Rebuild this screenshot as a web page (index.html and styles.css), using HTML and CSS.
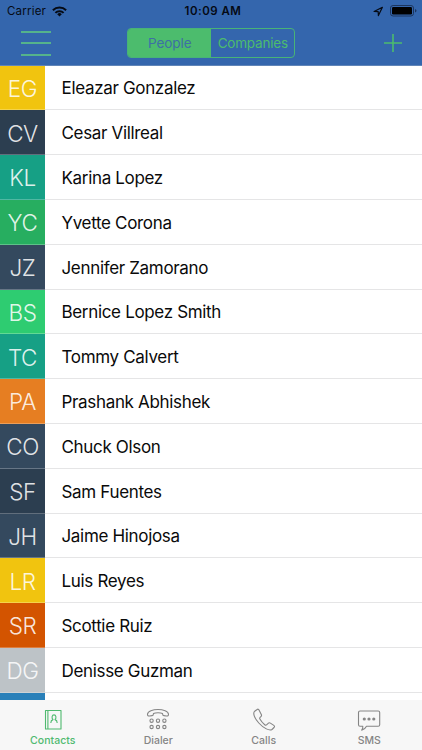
FILE: index.html
```html
<!DOCTYPE html>
<html lang="en">
<head>
<meta charset="utf-8">
<title>Contacts</title>
<link rel="stylesheet" href="styles.css">
</head>
<body>
<div class="app">
  <header class="header">
    <div class="status">
      <div class="carrier"><span>Carrier</span>
        <svg width="15" height="11" viewBox="0 0 15 11"><g fill="none" stroke="#050a14" stroke-width="2"><path d="M.9 4.2a9.4 9.4 0 0 1 13.2 0"/><path d="M3.4 6.9a5.8 5.8 0 0 1 8.2 0"/></g><path d="M5.2 8.2a3.3 3.3 0 0 1 4.6 0L7.5 10.6z" fill="#050a14"/></svg>
      </div>
      <div class="time">10:09 AM</div>
      <div class="indicators">
        <svg width="11" height="11" viewBox="0 0 11 11"><path d="M1.1 5.5 9.4 1.3 5.4 9.6 5.2 5.7z" fill="none" stroke="#050a14" stroke-width="1.2" stroke-linejoin="round"/></svg>
        <svg width="27" height="12" viewBox="0 0 27 12"><rect x=".5" y=".5" width="23" height="10.5" rx="2.6" fill="none" stroke="#1c355d"/><rect x="2" y="2" width="20" height="7.5" rx="1.2" fill="#000"/><path d="M25 4v3.5q1.5-.5 1.5-1.75T25 4" fill="#1c355d"/></svg>
      </div>
    </div>
    <nav class="toolbar">
      <div class="menu"><i></i><i></i><i></i></div>
      <div class="segments"><div class="segment selected">People</div><div class="segment">Companies</div></div>
      <svg class="add" width="18" height="18" viewBox="0 0 18 18"><path d="M9 0v18M0 9h18" stroke="#4cbc6d" stroke-width="1.6"/></svg>
    </nav>
  </header>
  <main class="list">
    <div class="row"><div class="avatar yellow">EG</div><div class="name">Eleazar Gonzalez</div></div>
    <div class="row"><div class="avatar midnight">CV</div><div class="name">Cesar Villreal</div></div>
    <div class="row"><div class="avatar teal">KL</div><div class="name">Karina Lopez</div></div>
    <div class="row"><div class="avatar green">YC</div><div class="name">Yvette Corona</div></div>
    <div class="row"><div class="avatar slate">JZ</div><div class="name">Jennifer Zamorano</div></div>
    <div class="row"><div class="avatar emerald">BS</div><div class="name">Bernice Lopez Smith</div></div>
    <div class="row"><div class="avatar teal">TC</div><div class="name">Tommy Calvert</div></div>
    <div class="row"><div class="avatar orange">PA</div><div class="name">Prashank Abhishek</div></div>
    <div class="row"><div class="avatar slate">CO</div><div class="name">Chuck Olson</div></div>
    <div class="row"><div class="avatar midnight">SF</div><div class="name">Sam Fuentes</div></div>
    <div class="row"><div class="avatar slate">JH</div><div class="name">Jaime Hinojosa</div></div>
    <div class="row"><div class="avatar yellow">LR</div><div class="name">Luis Reyes</div></div>
    <div class="row"><div class="avatar pumpkin">SR</div><div class="name">Scottie Ruiz</div></div>
    <div class="row"><div class="avatar silver">DG</div><div class="name">Denisse Guzman</div></div>
    <div class="row"><div class="avatar blue"></div><div class="name"></div></div>
  </main>
  <footer class="tabs">
    <div class="tab active">
      <svg width="24" height="24" viewBox="0 0 24 24"><path d="M4.500 2.500h15.500v18.500H4.500zM6.900 2.500v18.500M9.800 14.900c0-2.300.9-2.900 2.200-3.300-1.700-1.600-1-4.700 1-4.700s2.700 3.100 1 4.700c1.300.4 2.200 1 2.200 3.300"/></svg>
      <span>Contacts</span>
    </div>
    <div class="tab">
      <svg width="24" height="24" viewBox="0 0 24 24"><path d="M1.500 6.200C2 0 22 0 22.500 6.200c0 1.500-.8 2-2.100 1.800l-2.500-.4c-1.100-.2-1.400-.7-1.400-2.200-2-.8-7-.8-9 0 0 1.500-.3 2-1.400 2.200l-2.500.4C2.300 8.200 1.500 7.700 1.500 6.200z"/><g><circle cx="5.600" cy="12.700" r="1.650"/><circle cx="12" cy="12.700" r="1.650"/><circle cx="18.400" cy="12.700" r="1.650"/><circle cx="5.600" cy="19" r="1.650"/><circle cx="12" cy="19" r="1.650"/><circle cx="18.400" cy="19" r="1.650"/></g></svg>
      <span>Dialer</span>
    </div>
    <div class="tab">
      <svg width="24" height="24" viewBox="0 0 24 24"><path d="M5.100 1.500 2.700 3.200C.5 5.200 2.500 10.300 6.800 15c5 5.500 10.700 8 13.200 6.500l2-2c.8-.9.600-1.500-.2-2.100l-3.400-2.300c-.8-.5-1.600-.4-2.300.3l-1.500 1.400c-.6.500-1.200.400-1.900-.1-2.200-1.700-3.600-3.500-4.800-5.600-.4-.7-.3-1.200.2-1.700l.8-.8c.8-.7.800-1.400.4-2.200L7 2c-.5-.9-1.100-1.100-1.900-.5z"/></svg>
      <span>Calls</span>
    </div>
    <div class="tab">
      <svg width="24" height="24" viewBox="0 0 24 24"><path d="M3 3h18.200q1.500 0 1.500 1.500v12.200q0 1.500-1.500 1.500H9.500Q8 21.300 4.700 22.100q1.400-1.800 1.100-3.900H3q-1.500 0-1.500-1.500V4.500Q1.500 3 3 3z"/><g class="dots"><circle cx="7.300" cy="11" r="1.600"/><circle cx="12" cy="11" r="1.600"/><circle cx="16.800" cy="11" r="1.600"/></g></svg>
      <span>SMS</span>
    </div>
  </footer>
</div>
</body>
</html>
```
FILE: styles.css
```css
* { box-sizing: border-box; }
body { margin: 0; font-family: Inter, "Liberation Sans", sans-serif; }
.app { width: 422px; height: 750px; display: flex; flex-direction: column; overflow: hidden; background: #fff; }
.header { height: 65.6px; flex: none; background: #3466ad; border-bottom: 1px solid #6085b8; }
.status { height: 22px; display: grid; grid-template-columns: 1fr auto 1fr; align-items: center; padding: 0 5px 0 7px; color: #050a14; font-size: 11.5px; letter-spacing: .2px; }
.carrier { display: flex; align-items: center; gap: 6px; }
.time { font-weight: 600; letter-spacing: .5px; padding-left: 2px; }
.indicators { display: flex; justify-content: flex-end; align-items: center; gap: 6px; }
.toolbar { height: 42px; display: grid; grid-template-columns: 1fr 168px 1fr; align-items: center; padding: 0 20px 0 20.5px; }
.menu { width: 30px; height: 25px; display: flex; flex-direction: column; justify-content: space-between; }
.menu i { height: 2px; background: #55b38b; }
.add { justify-self: end; }
.segments { height: 30px; display: flex; border: 1px solid #48b377; border-radius: 4px; overflow: hidden; }
.segment { flex: 1; display: flex; align-items: center; justify-content: center; color: #4cbc6d; font-size: 13.5px; letter-spacing: -.2px; }
.selected { background: #4cbc6d; color: #3d70a5; letter-spacing: -.1px; }
.list { flex: 1; min-height: 0; overflow: hidden; }
.row { height: 44.8px; display: flex; }
.avatar { width: 45px; display: flex; align-items: center; justify-content: center; padding-top: 1.5px; color: rgba(255,255,255,.87); font-size: 22.5px; font-weight: 350; letter-spacing: -.4px; border-bottom: 1px solid rgba(255,255,255,.25); }
.name { flex: 1; display: flex; align-items: center; padding: 2px 0 0 16.5px; border-bottom: 1px solid #e5e5e6; color: #0a0a0a; font-size: 17px; letter-spacing: -.33px; }
.yellow { background: #f1c40f; }
.midnight { background: #2c3e50; }
.teal { background: #16a085; }
.green { background: #27ae60; }
.slate { background: #34495e; }
.emerald { background: #2ecc71; }
.orange { background: #e67e22; }
.pumpkin { background: #d35400; }
.silver { background: #bdc3c7; }
.blue { background: #2980b9; }
.tabs { height: 50px; flex: none; display: flex; background: #f7f7f7; }
.tab { flex: 1; display: flex; flex-direction: column; align-items: center; padding-top: 7.5px; color: #858585; font-size: 10.5px; font-weight: 500; letter-spacing: .03px; line-height: 14px; gap: 2.5px; }
.active { color: #50ba70; }
.tab svg { fill: none; stroke: currentColor; stroke-width: 1.1; stroke-linejoin: round; }
.tab .dots { fill: currentColor; stroke: none; }
```
